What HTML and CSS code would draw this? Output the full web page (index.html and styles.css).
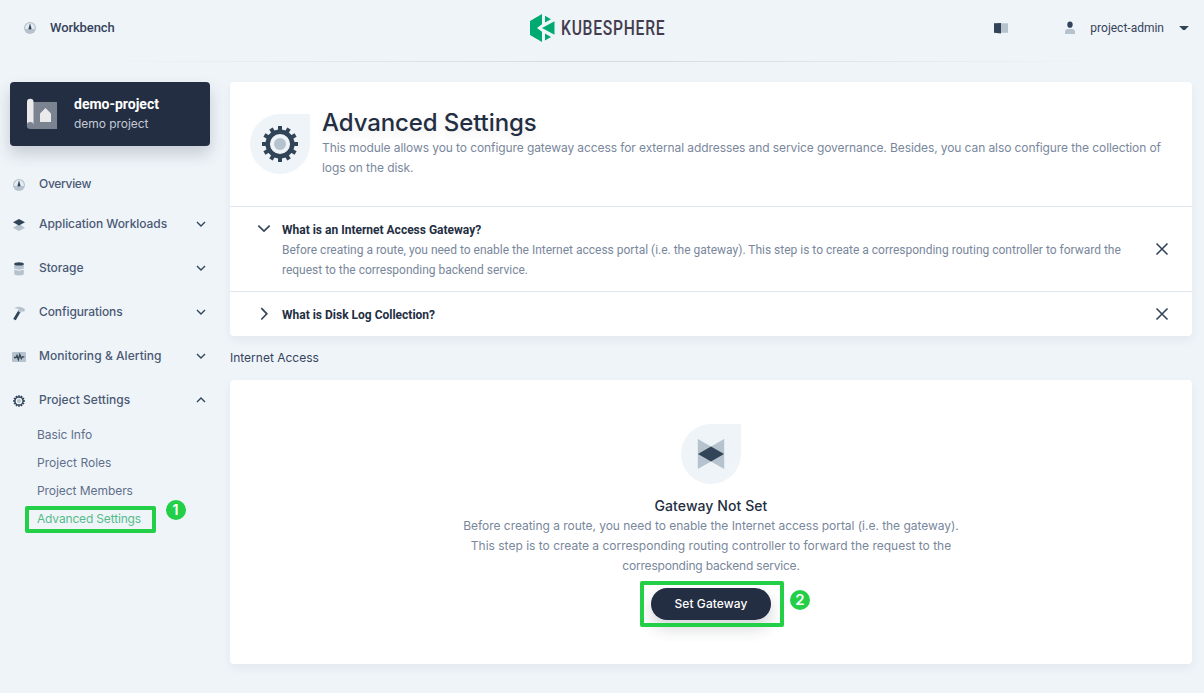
FILE: index.html
```html
<!DOCTYPE html>
<html lang="en">
<head>
<meta charset="utf-8">
<title>Advanced Settings</title>
<link rel="stylesheet" href="styles.css">
</head>
<body>
<svg class="defs" width="0" height="0" aria-hidden="true">
  <symbol id="dash" viewBox="0 0 16 16"><circle cx="8" cy="8" r="6" fill="#b6c2cd"/><path d="M3.200 9a4.900 4.900 0 1 1 9.600 0z" fill="#e4ebf1"/><path d="M8 3.200 9.400 8.200a1.400 1.400 0 0 1-2.800 0z" fill="#324558"/></symbol>
  <symbol id="down" viewBox="0 0 16 16"><path d="m4 6 4 4 4-4" fill="none" stroke="#324558" stroke-width="1.4"/></symbol>
  <symbol id="close" viewBox="0 0 20 20"><path d="m4.500 4.500 11 11m0-11-11 11" fill="none" stroke="#324558" stroke-width="1.600"/></symbol>
  <symbol id="gear" viewBox="0 0 40 40">
    <g stroke="#324558" stroke-width="4"><path d="M20 2v36M2 20h36"/><path d="M20 2v36M2 20h36" transform="rotate(30 20 20)"/><path d="M20 2v36M2 20h36" transform="rotate(60 20 20)"/></g>
    <circle cx="20" cy="20" r="12.300" fill="#eff4f9" stroke="#324558" stroke-width="4.500"/><circle cx="20" cy="20" r="6" fill="#b6c2cd"/>
  </symbol>
</svg>

<header class="topbar">
  <a class="workbench"><svg class="i16"><use href="#dash"/></svg><span>Workbench</span></a>
  <div class="logo">
    <svg width="25" height="30" viewBox="0 0 25 30"><path fill="#00a971" d="M12 1v10.200L7 15l5 3.800V29L0 22V8zM15 2.700l6 3.500-6 3.300zM24.500 8.200v13.600L12 15zM15 20.500l6 3.400-6 3.500z"/></svg>
    <span class="logo-text">KUBESPHERE</span>
  </div>
  <div class="account">
    <svg class="i16 book" viewBox="0 0 16 16"><path d="M1 3.300 8 3v10.600L1 12.700z" fill="#324558"/><path d="M8 3.300h7v9.500H8z" fill="#b6c2cd"/></svg>
    <svg class="i16" viewBox="0 0 16 16"><ellipse cx="8" cy="4.700" rx="2.700" ry="3.100" fill="#324558"/><path d="M3 14v-2q0-3 3-3h4q3 0 3 3v2z" fill="#b6c2cd"/></svg>
    <span class="user">project-admin</span>
    <svg class="i16" viewBox="0 0 16 16"><path d="M3.200 6h9.600L9 10H7z" fill="#324558"/></svg>
  </div>
</header>

<div class="body">
  <aside class="sidebar">
    <div class="project">
      <svg width="32" height="32" viewBox="0 0 32 32"><path d="M7 5h24v27H4z" fill="#7b8290"/><path d="M1 5a3 3 0 0 1 6.500 0v22.500H1z" fill="#eaeaed"/><circle cx="4.200" cy="28.500" r="3.400" fill="#7b8290"/><path d="m19.500 11 5.500 5.500V25H14v-8.500z" fill="#eaeaed"/></svg>
      <div><div class="project-name">demo-project</div><div class="project-desc">demo project</div></div>
    </div>
    <nav class="nav">
      <a class="item overview"><svg class="i16"><use href="#dash"/></svg><span class="ov">Overview</span></a>
      <a class="item"><svg class="i16" viewBox="0 0 16 16"><path d="m8 7 6 3.700L8 14l-6-3.300z" fill="#b6c2cd"/><path d="m8 2 6 3.300-6 3.300-6-3.300z" fill="#324558"/></svg><span class="wl">Application Workloads</span><svg class="i16 arrow"><use href="#down"/></svg></a>
      <a class="item"><svg class="i16" viewBox="0 0 16 16"><path d="M3.200 2.500h9.600v11q-4.800 2.200-9.600 0z" fill="#b6c2cd"/><path d="M3 8.200q5 2.200 10 0" fill="none" stroke="#eff4f9"/><ellipse cx="8" cy="2.900" rx="4.800" ry="1.700" fill="#324558"/></svg><span class="st">Storage</span><svg class="i16 arrow"><use href="#down"/></svg></a>
      <a class="item"><svg class="i16" viewBox="0 0 16 16"><path d="m7.400 5.200 2.400 1.200-5 8.900-2.600-1.200z" fill="#324558"/><path d="M3 3.200Q7 .500 11 2.500l3 1.400-.800 3-2.400-.900L10 8 7.200 6.400 8 4.500Q6 3.200 3 3.200z" fill="#b6c2cd"/></svg><span class="cf">Configurations</span><svg class="i16 arrow"><use href="#down"/></svg></a>
      <a class="item"><svg class="i16" viewBox="0 0 16 16"><rect x="1" y="3" width="14" height="10" rx="1" fill="#b6c2cd"/><path d="M3 8.500h2l1-2 1.400 4 1.400-5 1.500 4 1-1.700h2" fill="none" stroke="#324558" stroke-width="1.300"/></svg><span class="ma">Monitoring &amp; Alerting</span><svg class="i16 arrow"><use href="#down"/></svg></a>
      <a class="item"><svg class="i16" viewBox="-4 -4 48 48"><use href="#gear" width="40" height="40"/></svg><span class="ps">Project Settings</span><svg class="i16 arrow up"><use href="#down"/></svg></a>
    </nav>
    <div class="subnav">
      <a>Basic Info</a><a class="roles">Project Roles</a><a>Project Members</a>
      <a class="active">Advanced Settings<span class="mark mark-nav"></span><span class="step step-nav">1</span></a>
    </div>
  </aside>

  <main class="main">
    <section class="panel">
      <div class="intro">
        <div class="drop"><svg width="40" height="40"><use href="#gear"/></svg></div>
        <div><h1>Advanced Settings</h1><p>This module allows you to configure gateway access for external addresses and service governance. Besides, you can also configure the collection of<br>logs on the disk.</p></div>
      </div>
      <div class="faq">
        <svg class="i20" viewBox="2 2 12 12"><path d="m4.600 6 3.400 3.300L11.400 6" fill="none" stroke="#324558" stroke-width="1"/></svg>
        <div class="faq-text"><h2>What is an Internet Access Gateway?</h2><p>Before creating a route, you need to enable the Internet access portal (i.e. the gateway). This step is to create a corresponding routing controller to forward the<br>request to the corresponding backend service.</p></div>
        <svg class="i20 close"><use href="#close"/></svg>
      </div>
      <div class="faq">
        <svg class="i20" viewBox="2 2 12 12"><path d="m6.400 4.500 3.300 3.400-3.300 3.400" fill="none" stroke="#324558" stroke-width="1"/></svg>
        <div class="faq-text"><h2>What is Disk Log Collection?</h2></div>
        <svg class="i20 close"><use href="#close"/></svg>
      </div>
    </section>
    <h3>Internet Access</h3>
    <section class="panel empty">
      <div class="drop"><svg width="40" height="40" viewBox="0 0 40 40"><path d="m6.800 5 13.200 7.500L33.200 5v30L20 27.500 6.800 35z" fill="#b6c2cd"/><path d="m20 12.500 13 7.500-13 7.500L7 20z" fill="#324558"/></svg></div>
      <div class="empty-title">Gateway Not Set</div>
      <p><span class="tight">Before creating a route, you need to enable the Internet access portal (i.e. the gateway).</span><br>This step is to create a corresponding routing controller to forward the request to the<br><span class="tighter">corresponding backend service.</span></p>
      <div class="action"><button>Set Gateway</button><span class="mark mark-btn"></span><span class="step step-btn">2</span></div>
    </section>
  </main>
</div>
</body>
</html>
```
FILE: styles.css
```css
* { box-sizing: border-box; }
body {
  margin: 0;
  height: 693px;
  overflow: hidden;
  background: #eff4f9;
  color: #242e42;
  font: 400 12px/20px Inter, Roboto, sans-serif;
}
h1, h2, h3, p { margin: 0; }
svg { display: block; flex: none; }
.defs { position: absolute; }
.i16 { width: 16px; height: 16px; }
.i20 { width: 20px; height: 20px; }

.topbar {
  display: grid;
  grid-template-columns: 508px 180px 1fr;
  align-items: center;
  height: 62px;
  padding: 0 12px 6px 22px;
  background: linear-gradient(90deg, rgba(212,219,227,0) 8%, #d5dce3 45%, #d5dce3 55%, rgba(212,219,227,0) 92%) 0 61px / 100% 1px no-repeat;
}
.workbench { display: flex; align-items: center; gap: 12px; font: 500 13px/20px Roboto, sans-serif; letter-spacing: -.1px; color: #36435c; }
.logo { display: flex; align-items: center; gap: 6px; }
.logo-text { font: 500 21px/30px Roboto, sans-serif; letter-spacing: 1px; color: #443d4e; transform: scaleX(.745); transform-origin: 0 50%; }
.account { display: flex; align-items: center; justify-content: flex-end; font-family: Roboto, sans-serif; color: #36435c; }
.book { margin-right: 53px; }
.user { margin: 0 12px; }

.body { display: grid; grid-template-columns: 200px 962px; gap: 20px; padding: 20px 12px 0 10px; }
.project {
  display: flex;
  gap: 16px;
  height: 64px;
  padding: 12px 16px;
  border-radius: 4px;
  background: #242e42;
  box-shadow: 0 8px 16px rgba(36,46,66,.2);
}
.project svg { margin-top: 3px; }
.project-name { font: 700 14px/20px Roboto, sans-serif; color: #fff; }
.project-desc { color: #c3cad6; letter-spacing: -.04px; }

.nav { padding-top: 16px; }
.item { display: flex; align-items: center; height: 44px; padding: 0 1px; color: #4a5974; font-weight: 500; }
.item > svg:first-child { margin-top: 2px; }
.item span { margin-left: 12px; }
.overview { height: 40px; margin: 2px 0 -2px; }
.item .arrow { margin-left: auto; }
.up { transform: rotate(180deg); }
.ov { letter-spacing: -.3px; }
.wl { letter-spacing: -.06px; }
.st { letter-spacing: -.05px; }
.cf { letter-spacing: -.1px; }
.ma { letter-spacing: .05px; }
.ps { letter-spacing: .05px; }
.subnav { display: grid; grid-auto-rows: 28px; align-items: center; justify-items: start; margin-top: -1px; padding-left: 27px; color: #5f708a; letter-spacing: -.06px; }
.roles { letter-spacing: .02px; }
.active { position: relative; color: #55bc8a; letter-spacing: -.16px; }

.mark { position: absolute; border: 4px solid #22cf47; border-radius: 2px; }
.step { position: absolute; width: 20px; height: 20px; border-radius: 50%; background: #22cf47; color: #fff; text-align: center; font: 600 15px/20px Inter, sans-serif; letter-spacing: 0; }
.mark-nav { left: -12px; top: -3px; width: 131px; height: 27px; }
.step-nav { left: 128.500px; top: -9px; }

.panel { background: #fff; border-radius: 4px; box-shadow: 0 4px 8px rgba(36,46,66,.06); }
.intro { display: flex; gap: 12px; height: 124px; padding: 25px 20px 0; color: #79879c; letter-spacing: -.09px; }
.drop { width: 60px; height: 60px; padding: 10px; border-radius: 50% 0 50% 50%; background: #eff4f9; }
.intro .drop { margin-top: 7px; }
h1 { font: 500 24px/32px Inter, sans-serif; letter-spacing: -.1px; color: #242e42; text-shadow: 0 4px 8px rgba(36,46,66,.1); }
.intro p { margin-top: -1px; white-space: nowrap; }
.faq { display: flex; padding: 12px 20px 11px 24px; border-top: 1px solid #e1e7ee; font-family: Roboto, sans-serif; }
.faq-text { flex: 1; margin-left: 8px; }
h2 { padding-top: 1px; font: 700 12px/20px Roboto, sans-serif; }
.faq p { color: #79879c; letter-spacing: -.005px; white-space: nowrap; }
.close { align-self: center; margin: -1px 0 1px; }
h3 { margin: 12px 0; font: 400 12px/20px Inter, sans-serif; color: #36435c; }

.empty { display: flex; flex-direction: column; align-items: center; height: 284px; padding-top: 44px; color: #79879c; text-align: center; }
.empty-title { margin-top: 12px; font-size: 14px; font-weight: 500; letter-spacing: .08px; color: #242e42; }
.tight { letter-spacing: -.035px; }
.tighter { letter-spacing: -.2px; }
.action { position: relative; margin-top: 12px; }
button { display: block; width: 120px; height: 32px; border: 0; border-radius: 16px; background: #242e42; color: #fff; font: 500 12px/20px Inter, sans-serif; letter-spacing: .08px; box-shadow: 0 8px 16px rgba(36,46,66,.2); }
.mark-btn { left: -11px; top: -7px; width: 144px; height: 46px; }
.step-btn { left: 139px; top: 2px; }
```
